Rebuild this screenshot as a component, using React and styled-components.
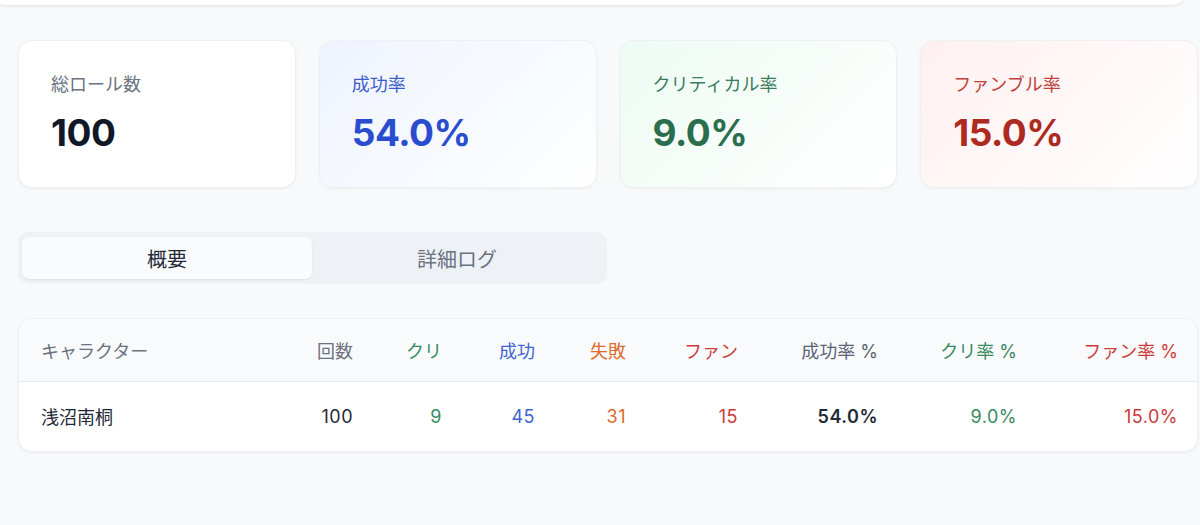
import React from "react";
import styled, { createGlobalStyle } from "styled-components";

const Global = createGlobalStyle`
  html, body { margin: 0; padding: 0; background: #f8f9fb; }
  body { font-family: "Inter", "Noto Sans CJK JP", sans-serif; color: #1f2937; overflow: hidden; }
  * { box-sizing: border-box; }
`;

const Page = styled.div`
  width: 1200px;
  height: 525px;
  padding: 0 2px 0 18px;
  display: flex;
  flex-direction: column;
`;

const TopCard = styled.div`
  height: 40px;
  margin: -34px 10px 0 -30px;
  background: #ffffff;
  border: 1px solid #e8ebf0;
  border-radius: 16px;
  box-shadow: 0 1px 3px rgba(15, 23, 42, 0.05);
`;

const StatGrid = styled.div`
  display: grid;
  grid-template-columns: repeat(4, 1fr);
  gap: 23px;
  margin-top: 34px;
`;

const tones = {
  neutral: { bg: "#ffffff", label: "#6b7280", value: "#111827" },
  blue: { bg: "linear-gradient(135deg, #eef3fe 0%, #ffffff 100%)", label: "#3d5ccc", value: "#2a4dcf" },
  green: { bg: "linear-gradient(135deg, #eefbf4 0%, #ffffff 100%)", label: "#3a7d5c", value: "#2b6e4e" },
  red: { bg: "linear-gradient(135deg, #fff0f0 0%, #ffffff 100%)", label: "#c0403a", value: "#ad2a22" },
};

const StatCard = styled.div`
  height: 148px;
  padding: 32px 32px;
  border-radius: 14px;
  border: 1px solid #eef0f3;
  background: ${(p) => tones[p.$tone].bg};
  box-shadow: 0 1px 3px rgba(15, 23, 42, 0.05);
  display: flex;
  flex-direction: column;
  gap: 14px;
`;

const StatLabel = styled.div`
  font-size: 18px;
  line-height: 24px;
  font-weight: 400;
  color: ${(p) => tones[p.$tone].label};
`;

const StatValue = styled.div`
  font-size: 37px;
  line-height: 44px;
  font-weight: 700;
  letter-spacing: -0.5px;
  color: ${(p) => tones[p.$tone].value};
`;

const Tabs = styled.div`
  margin-top: 44px;
  width: 589px;
  height: 52px;
  padding: 5px 5px 5px 4px;
  background: #eef2f7;
  border-radius: 10px;
  display: grid;
  grid-template-columns: 1fr 1fr;
`;

const Tab = styled.div`
  display: flex;
  align-items: center;
  justify-content: center;
  font-size: 20px;
  font-weight: 400;
  border-radius: 7px;
  color: ${(p) => (p.$active ? "#1f2937" : "#6b7280")};
  background: ${(p) => (p.$active ? "#fafbfc" : "transparent")};
  box-shadow: ${(p) => (p.$active ? "0 1px 2px rgba(15,23,42,0.08)" : "none")};
`;

const TableCard = styled.div`
  margin-top: 34px;
  width: 1180px;
  background: #ffffff;
  border: 1px solid #eceff3;
  border-radius: 14px;
  overflow: hidden;
  box-shadow: 0 1px 3px rgba(15, 23, 42, 0.05);
`;

const Table = styled.table`
  width: 100%;
  border-collapse: collapse;
  table-layout: fixed;
`;

const colors = {
  gray: "#6b7280",
  slate: "#5b6474",
  dark: "#1f2937",
  green: "#3a8a62",
  blue: "#3f63d0",
  orange: "#dd6b2a",
  red: "#cc3a3a",
};

const Th = styled.th`
  height: 62px;
  background: #f8fafc;
  border-bottom: 1px solid #e4e8ef;
  font-size: 18px;
  font-weight: 400;
  padding: 0 20px 0 ${(p) => (p.$left ? "22px" : "0")};
  text-align: ${(p) => (p.$left ? "left" : "right")};
  color: ${(p) => colors[p.$c]};
  white-space: nowrap;
`;

const Td = styled.td`
  height: 70px;
  font-size: 18px;
  padding: 0 20px 0 ${(p) => (p.$left ? "22px" : "0")};
  text-align: ${(p) => (p.$left ? "left" : "right")};
  color: ${(p) => colors[p.$c]};
  font-weight: ${(p) => (p.$bold ? 600 : 400)};
  letter-spacing: ${(p) => (p.$left ? "0" : "0.5px")};
  white-space: nowrap;
`;

const widths = [264, 90, 89, 93, 91, 112, 140, 139, 161];

const headers = [
  ["キャラクター", "gray", true],
  ["回数", "gray"],
  ["クリ", "green"],
  ["成功", "blue"],
  ["失敗", "orange"],
  ["ファン", "red"],
  ["成功率 %", "slate"],
  ["クリ率 %", "green"],
  ["ファン率 %", "red"],
];

const row = [
  ["浅沼南桐", "dark", true],
  ["100", "dark"],
  ["9", "green"],
  ["45", "blue"],
  ["31", "orange"],
  ["15", "red"],
  ["54.0%", "dark", false, true],
  ["9.0%", "green"],
  ["15.0%", "red"],
];

const stats = [
  ["総ロール数", "100", "neutral"],
  ["成功率", "54.0%", "blue"],
  ["クリティカル率", "9.0%", "green"],
  ["ファンブル率", "15.0%", "red"],
];

export default function App() {
  return (
    <>
      <Global />
      <Page>
        <TopCard />
        <StatGrid>
          {stats.map(([label, value, tone]) => (
            <StatCard key={label} $tone={tone}>
              <StatLabel $tone={tone}>{label}</StatLabel>
              <StatValue $tone={tone}>{value}</StatValue>
            </StatCard>
          ))}
        </StatGrid>
        <Tabs>
          <Tab $active>概要</Tab>
          <Tab>詳細ログ</Tab>
        </Tabs>
        <TableCard>
          <Table>
            <colgroup>
              {widths.map((w, i) => (
                <col key={i} style={{ width: w }} />
              ))}
            </colgroup>
            <thead>
              <tr>
                {headers.map(([t, c, left]) => (
                  <Th key={t} $c={c} $left={left}>{t}</Th>
                ))}
              </tr>
            </thead>
            <tbody>
              <tr>
                {row.map(([t, c, left, bold], i) => (
                  <Td key={i} $c={c} $left={left} $bold={bold}>{t}</Td>
                ))}
              </tr>
            </tbody>
          </Table>
        </TableCard>
      </Page>
    </>
  );
}
